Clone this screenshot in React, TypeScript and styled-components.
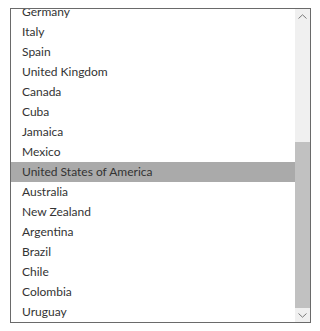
import * as React from 'react'
import styled, { createGlobalStyle } from 'styled-components'

const GlobalStyle = createGlobalStyle`
  body {
    margin: 0;
    background: #ffffff;
    font-family: "Segoe UI", Lato, "Noto Sans", sans-serif;
  }
`

const Page = styled.div`
  padding: 8px 10px;
`

const ListBox = styled.div`
  width: 299px;
  height: 313px;
  border: 1px solid #6a6a6a;
  display: flex;
  background: #ffffff;
`

const Options = styled.ul`
  flex: 1;
  margin: 0;
  padding: 0;
  list-style: none;
  overflow: hidden;
`

const Option = styled.li<{ $selected?: boolean }>`
  height: 20px;
  line-height: 20px;
  padding-left: 11px;
  font-size: 12px;
  color: #333333;
  white-space: nowrap;
  background: ${ p => p.$selected ? '#aaaaaa' : 'transparent' };
`

const Scrollbar = styled.div`
  width: 15px;
  background: #f0f0f0;
  display: flex;
  flex-direction: column;
`

const Arrow = styled.div`
  height: 14px;
  display: flex;
  align-items: center;
  justify-content: center;
  flex-shrink: 0;
`

const Track = styled.div`
  flex: 1;
  display: flex;
  flex-direction: column;
  justify-content: flex-end;
`

const Thumb = styled.div`
  height: 166px;
  background: #c1c1c1;
`

const countries = [
  'France', 'Portugal', 'Greece', 'Poland', 'Sweden', 'Norway', 'Ireland',
  'Belgium', 'Austria', 'Denmark', 'Finland', 'Germany', 'Italy', 'Spain',
  'United Kingdom', 'Canada', 'Cuba', 'Jamaica', 'Mexico',
  'United States of America', 'Australia', 'New Zealand', 'Argentina',
  'Brazil', 'Chile', 'Colombia', 'Uruguay'
]

const Chevron = ({ up }: { up?: boolean }) => (
  <svg width="9" height="5" viewBox="0 0 9 5">
    <path
      d={ up ? 'M0.5 4.5 L4.5 0.8 L8.5 4.5' : 'M0.5 0.5 L4.5 4.2 L8.5 0.5' }
      fill="none"
      stroke="#7a7a7a"
      strokeWidth="1"
    />
  </svg>
)

export default function App() {
  const listRef = React.useRef<HTMLUListElement>(null)

  React.useLayoutEffect(() => {
    if (listRef.current) listRef.current.scrollTop = listRef.current.scrollHeight
  }, [])

  return (
    <Page>
      <GlobalStyle />
      <ListBox>
        <Options ref={ listRef }>
          { countries.map(c => (
            <Option key={ c } $selected={ c === 'United States of America' }>{ c }</Option>
          )) }
        </Options>
        <Scrollbar>
          <Arrow><Chevron up /></Arrow>
          <Track><Thumb /></Track>
          <Arrow><Chevron /></Arrow>
        </Scrollbar>
      </ListBox>
    </Page>
  )
}
